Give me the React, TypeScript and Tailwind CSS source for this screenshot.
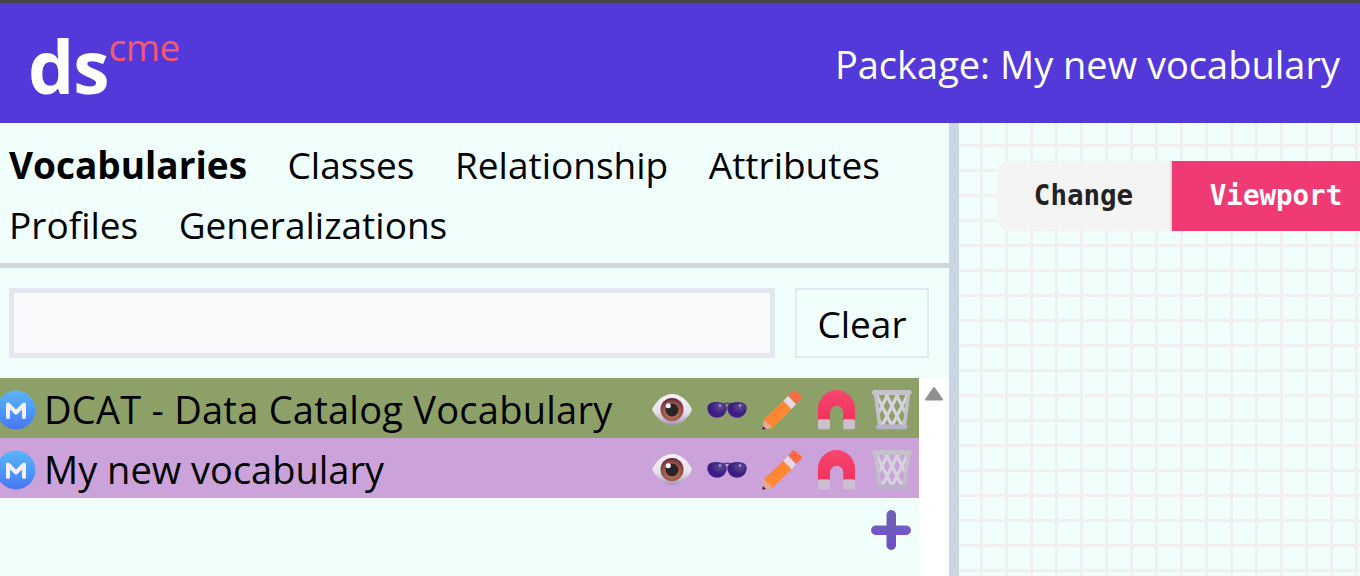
import React from 'react';

const uiFont = "font-['Open_Sans','Noto_Sans',sans-serif]";

const ModelIcon = () => (
  <svg viewBox="0 0 40 40" className="w-10 h-10 shrink-0 -ml-1">
    <defs>
      <linearGradient id="mBlue" x1="0.5" y1="0" x2="0.5" y2="1">
        <stop offset="0" stopColor="#5bb5f7" />
        <stop offset="0.6" stopColor="#4a94f8" />
        <stop offset="1" stopColor="#4a74ec" />
      </linearGradient>
    </defs>
    <circle cx="20" cy="20" r="19.5" fill="url(#mBlue)" />
    <polyline points="12,27 12,14.5 20,22.5 28,14.5 28,27" fill="none" stroke="#f4f0ff" strokeWidth="4" strokeLinecap="round" strokeLinejoin="round" />
  </svg>
);

const EyeIcon = () => (
  <svg viewBox="0 0 40 40" className="w-10 h-10 shrink-0">
    <defs>
      <linearGradient id="eyeWhite" x1="0.5" y1="0" x2="0.5" y2="1">
        <stop offset="0" stopColor="#f6f3f8" />
        <stop offset="0.6" stopColor="#e6e0ea" />
        <stop offset="1" stopColor="#a596ba" />
      </linearGradient>
      <radialGradient id="eyeIris" cx="0.5" cy="0.62" r="0.62">
        <stop offset="0.4" stopColor="#b06a54" />
        <stop offset="0.72" stopColor="#8f4c44" />
        <stop offset="1" stopColor="#5f1c38" />
      </radialGradient>
    </defs>
    <path d="M0 19.5C5 9 13 4 20 4C28 4 36 10 40 19.5C36 29 28 35 20 35C12 35 5 29 0 19.5Z" fill="url(#eyeWhite)" />
    <circle cx="20" cy="19.5" r="11.5" fill="url(#eyeIris)" />
    <circle cx="20" cy="20" r="6.5" fill="#2b2326" />
    <circle cx="16.3" cy="15.7" r="2.5" fill="#fff" />
  </svg>
);

const GlassesIcon = () => (
  <svg viewBox="0 0 40 40" className="w-10 h-10 shrink-0">
    <defs>
      <radialGradient id="lens" cx="0.65" cy="0.3" r="0.8">
        <stop offset="0" stopColor="#5f4b95" />
        <stop offset="0.6" stopColor="#3a1d7c" />
        <stop offset="1" stopColor="#431f9a" />
      </radialGradient>
    </defs>
    <path d="M16 14C18 13.2 22 13.2 24 14" fill="none" stroke="#4f3f9f" strokeWidth="1.6" />
    <path d="M0.3 18C0.3 14 4 12 9.5 12C15 12 19.7 14 19.7 18C19.7 23.5 15.5 27.7 10 27.7C4.5 27.7 0.3 23.5 0.3 18Z" fill="url(#lens)" />
    <path d="M20.3 18C20.3 14 25 12 30.5 12C36 12 39.7 14 39.7 18C39.7 23.5 35.5 27.7 30 27.7C24.5 27.7 20.3 23.5 20.3 18Z" fill="url(#lens)" />
    <circle cx="13" cy="15.5" r="1.3" fill="#a79bc9" />
    <circle cx="33" cy="15.5" r="1.3" fill="#a79bc9" />
  </svg>
);

const PencilIcon = () => (
  <svg viewBox="0 0 40 40" className="w-10 h-10 shrink-0">
    <defs>
      <linearGradient id="pencilBody" x1="0" y1="0" x2="1" y2="1">
        <stop offset="0" stopColor="#ff7b2e" />
        <stop offset="0.6" stopColor="#ff8a33" />
        <stop offset="1" stopColor="#f27426" />
      </linearGradient>
    </defs>
    <polygon points="0.3,39.7 2,29 10.5,38" fill="#e8a88e" />
    <polygon points="0.3,39.7 0.9,36 4,38.9" fill="#3c1a4e" />
    <polygon points="2,29 21.3,10.7 29.7,19.3 10.5,38" fill="url(#pencilBody)" />
    <polygon points="21.3,10.7 26.3,5.7 34,14 29.7,19.3" fill="#e4d8ea" />
    <path d="M26.3 5.7L29.5 1.5C30.5 0.3 32 0 33.2 1L38.7 5.6C40 6.8 39.9 8.2 39 9.3L34 14Z" fill="#fb6a40" />
  </svg>
);

const MagnetIcon = () => (
  <svg viewBox="0 0 40 40" className="w-10 h-10 shrink-0">
    <defs>
      <linearGradient id="magnetRed" x1="0.5" y1="0" x2="0.5" y2="1">
        <stop offset="0" stopColor="#f4476f" />
        <stop offset="1" stopColor="#f5305f" />
      </linearGradient>
    </defs>
    <path d="M1 30V18.5A18.5 18.5 0 0 1 38 18.5V30H26.3V21.7A6.7 6.7 0 0 0 13 21.7V30Z" fill="url(#magnetRed)" />
    <rect x="1" y="29.3" width="12" height="10" rx="1.5" fill="#cdbfd0" />
    <rect x="26.3" y="29.3" width="11.7" height="10" rx="1.5" fill="#cdbfd0" />
  </svg>
);

const TrashIcon = () => (
  <svg viewBox="0 0 40 40" className="w-10 h-10 shrink-0">
    <defs>
      <clipPath id="basket">
        <polygon points="3,4 37,4 33,36 7,36" />
      </clipPath>
    </defs>
    <g stroke="#d7d3de" strokeWidth="3.2" fill="none" clipPath="url(#basket)">
      <path d="M-6 4L10 36M4 4L20 36M14 4L30 36M24 4L40 36M34 4L50 36" />
      <path d="M46 4L30 36M36 4L20 36M26 4L10 36M16 4L0 36M6 4L-10 36" />
    </g>
    <path d="M3.5 4L7.5 35M36.5 4L32.5 35" stroke="#c4bfcd" strokeWidth="3.5" fill="none" />
    <rect x="0" y="0" width="39.7" height="5" rx="2.4" fill="#c6c2cc" />
    <rect x="4" y="34.5" width="31.5" height="4.8" rx="2.4" fill="#b9b2c8" />
  </svg>
);

const PlusIcon = () => (
  <svg viewBox="0 0 40 40" className="w-10 h-10 block">
    <defs>
      <linearGradient id="plusV" x1="0.5" y1="0" x2="0.5" y2="1">
        <stop offset="0" stopColor="#7261b5" />
        <stop offset="1" stopColor="#6a4fc0" />
      </linearGradient>
      <linearGradient id="plusH" x1="0.5" y1="0" x2="0.5" y2="1">
        <stop offset="0" stopColor="#6f62b8" />
        <stop offset="1" stopColor="#7a4cd8" />
      </linearGradient>
    </defs>
    <rect x="0" y="15.5" width="40" height="9.5" rx="4.7" fill="url(#plusH)" />
    <rect x="15.5" y="0" width="9.5" height="40" rx="4.7" fill="url(#plusV)" />
  </svg>
);

const VocabularyRow = ({ label, color, tracking = '' }: { label: string; color: string; tracking?: string }) => (
  <div className={`flex items-center h-[60px] pt-1 pr-[7px] gap-2 ${color}`}>
    <ModelIcon />
    <span className={`flex-1 text-[38px] leading-[52px] text-black whitespace-nowrap -mt-[2px] ${tracking}`}>{label}</span>
    <div className="flex gap-[15px]">
      <EyeIcon />
      <GlassesIcon />
      <PencilIcon />
      <MagnetIcon />
      <TrashIcon />
    </div>
  </div>
);

const tabs = ['Classes', 'Relationship', 'Attributes', 'Profiles', 'Generalizations'];

export default function App() {
  return (
    <div className={`h-screen overflow-hidden flex flex-col bg-[#f1fffc] ${uiFont}`}>
      {/* header */}
      <header className="h-[123px] shrink-0 border-t-[3px] border-[#454545] bg-[#5338da] flex items-center justify-between pl-[28px] pr-5">
        <div className="flex items-start mt-[6px]">
          <span className="text-[73px] leading-[80px] font-bold text-white tracking-[-1px]">ds</span>
          <span className="text-[37px] leading-[40px] font-medium text-[#f5596a] mt-[1px] tracking-[-0.5px]">cme</span>
        </div>
        <div className="text-[38px] text-white whitespace-nowrap mt-[2px]">Package: My new vocabulary</div>
      </header>

      <div className="flex flex-1 min-h-0">
        {/* left panel */}
        <div className="w-[949px] shrink-0 flex flex-col">
          <nav className="flex flex-wrap gap-x-[40.5px] h-[145px] pt-3 pl-[9px] border-b-[5px] border-[#d1d8dc] content-start">
            <span className="text-[37px] leading-[60px] font-bold text-black">Vocabularies</span>
            {tabs.map((tab) => (
              <span key={tab} className="text-[37px] leading-[60px] text-black">{tab}</span>
            ))}
          </nav>

          <div className="flex gap-5 pt-5 pl-[9px] pr-5">
            <input className="flex-1 h-[70px] border-[5px] border-[#e2e8f0] bg-[#f8fafc] outline-none" />
            <button className="w-[134px] h-[70px] pt-[2px] border-2 border-[#e2e8f0] text-[37px] text-black">Clear</button>
          </div>

          <div className="flex flex-1 mt-5 min-h-0">
            <div className="flex-1 min-w-0">
              <VocabularyRow label="DCAT - Data Catalog Vocabulary" color="bg-[#8da067]" tracking="tracking-[0.25px]" />
              <VocabularyRow label="My new vocabulary" color="bg-[#cba3da]" />
              <div className="flex justify-end pr-2 pt-3">
                <PlusIcon />
              </div>
            </div>
            <div className="w-[30px] shrink-0 bg-white pt-[9px] pl-[6px]">
              <svg viewBox="0 0 18 14" className="w-[18px] h-[14px] block">
                <path d="M9 1L17 12.5H1Z" fill="#8f8f8f" stroke="#8f8f8f" strokeWidth="2" strokeLinejoin="round" />
              </svg>
            </div>
          </div>
        </div>

        {/* divider */}
        <div className="w-[10px] shrink-0 bg-[#c9d6e3]" />

        {/* canvas */}
        <div className="flex-1 min-w-0 overflow-hidden pt-[38px] pl-[38px] bg-[#f1fffc] bg-[linear-gradient(to_right,#f0f0f0_3px,transparent_3px),linear-gradient(to_bottom,#f0f0f0_3px,transparent_3px)] bg-[size:25px_25px] bg-[position:21px_21px]">
          <div className="flex w-max h-[70px] font-['DejaVu_Sans_Mono',monospace] font-bold text-[27.5px]">
            <button className="w-[175px] rounded-l-[10px] bg-[#f4f4f5] text-[#222] border-r-2 border-[#dcdcdc]">Change</button>
            <button className="w-[208px] bg-[#f03a73] text-white">Viewport</button>
          </div>
        </div>
      </div>
    </div>
  );
}
